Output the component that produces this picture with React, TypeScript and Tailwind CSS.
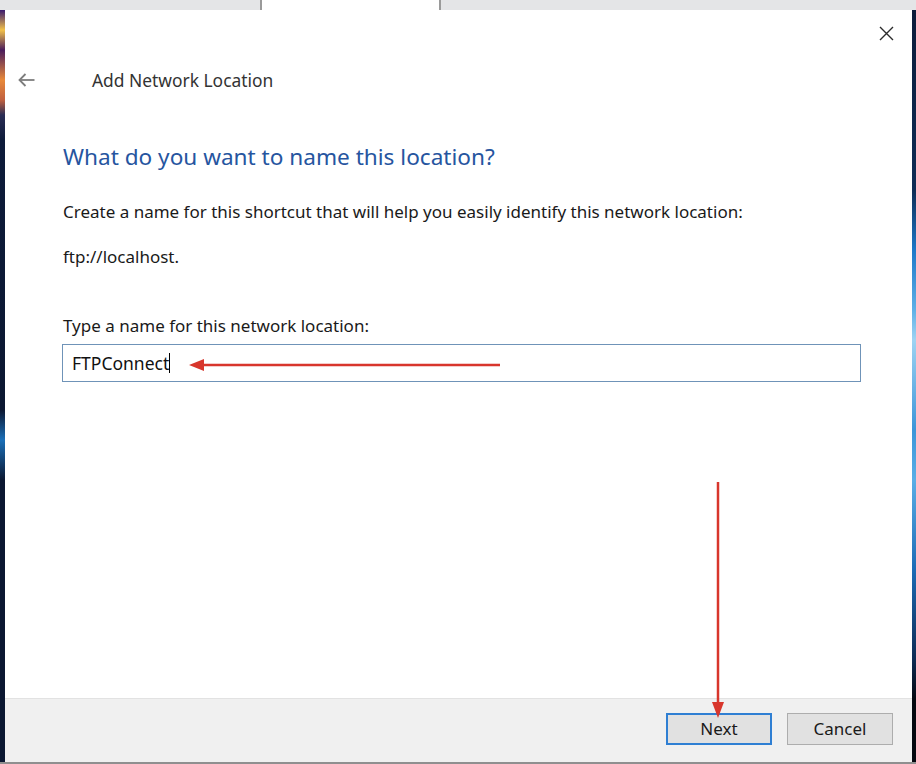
import React from 'react'

const font = "font-['Noto_Sans','Liberation_Sans',sans-serif]"

const BackArrow = () => (
    <svg width="17" height="14" viewBox="0 0 17 14" fill="none" stroke="#7d7d7d" strokeWidth="1.8">
        <path d="M16.5 7H1.5" />
        <path d="M7.5 1L1.5 7L7.5 13" />
    </svg>
)

const CloseIcon = () => (
    <svg width="15" height="15" viewBox="0 0 15 15" stroke="#2b2b2b" strokeWidth="1.4">
        <path d="M1 1L14 14M14 1L1 14" />
    </svg>
)

export default function App() {
    return (
        <div className={`w-[916px] h-[764px] flex flex-col overflow-hidden bg-[#0b1630] ${font}`}>
            {/* explorer tabs behind the dialog */}
            <div className="h-[10px] flex bg-[#e4e5e7]">
                <div className="w-[260px]" />
                <div className="w-[181px] bg-white border-x-2 border-[#9a9a9a]" />
                <div className="flex-1" />
            </div>

            <div className="flex-1 flex">
                <div className="w-[5px] bg-[linear-gradient(to_bottom,#3b1a6e_0px,#f2c14a_20px,#4a1c5c_40px,#e8893a_70px,#c06040_90px,#2a2d55_105px,#0d1b3a_130px,#0b1731_400px,#1a6fb8_430px,#0b1731_470px,#0b1731_100%)]" />

                <div className="flex-1 flex flex-col bg-white relative">
                    <div className="flex justify-end pt-[16px] pr-[18px] h-[30px]">
                        <CloseIcon />
                    </div>

                    <div className="flex items-center mt-[28px] h-[24px] pl-[13px]">
                        <BackArrow />
                        <span className="ml-[57px] text-[17.4px] text-[#333]">Add Network Location</span>
                    </div>

                    <div className="pl-[58px] pr-[51px] flex flex-col">
                        <h1 className="mt-[50px] h-[30px] leading-[30px] text-[22.6px] text-[#26559f]">What do you want to name this location?</h1>
                        <p className="mt-[30px] h-[20px] leading-[20px] text-[17px] text-[#1a1a1a]">Create a name for this shortcut that will help you easily identify this network location:</p>
                        <p className="mt-[25px] h-[20px] leading-[20px] text-[17px] text-[#1a1a1a]">ftp://localhost.</p>
                        <p className="mt-[49px] h-[20px] leading-[20px] text-[17px] text-[#1a1a1a]">Type a name for this network location:</p>

                        <div className="relative mt-[8px] -ml-[1px] h-[38px] border border-[#6f93b8] flex items-center pl-[9px]">
                            <span className="text-[17.5px] text-[#111]">FTPConnect</span>
                            <span className="w-px h-[20px] bg-black" />
                            <svg className="absolute left-[126px] top-[13px]" width="312" height="14" viewBox="0 0 312 14">
                                <path d="M12 7H311" stroke="#d8362c" strokeWidth="2.5" />
                                <path d="M0 7L15 1L15 13Z" fill="#d8362c" />
                            </svg>
                        </div>
                    </div>

                    <svg className="absolute left-[706px] top-[472px]" width="14" height="236" viewBox="0 0 14 236">
                        <path d="M7 0V222" stroke="#d8362c" strokeWidth="2.5" />
                        <path d="M7 236L1 220L13 220Z" fill="#d8362c" />
                    </svg>

                    <div className="mt-auto h-[64px] border-t border-[#e2e2e2] bg-[#f0f0f0] flex justify-end items-start pt-[14px] pr-[19px] gap-[15px]">
                        <button className="w-[106px] h-[32px] border-2 border-[#2f7fd3] bg-[#e1e1e1] text-[17px] text-[#1a1a1a]">Next</button>
                        <button className="w-[106px] h-[32px] border border-[#adadad] bg-[#e1e1e1] text-[17px] text-[#1a1a1a]">Cancel</button>
                    </div>
                </div>

                <div className="w-[4px] bg-[linear-gradient(to_bottom,#0c1c3a_0px,#0f2c55_180px,#1f78c8_240px,#5fb0e6_300px,#9fd3f2_330px,#3d95d8_420px,#5aaee6_470px,#1d6bb5_560px,#0e2a52_650px,#05080f_690px,#05080f_100%)]" />
            </div>

            <div className="h-[2px] bg-[#8f8f8f]" />
        </div>
    )
}
